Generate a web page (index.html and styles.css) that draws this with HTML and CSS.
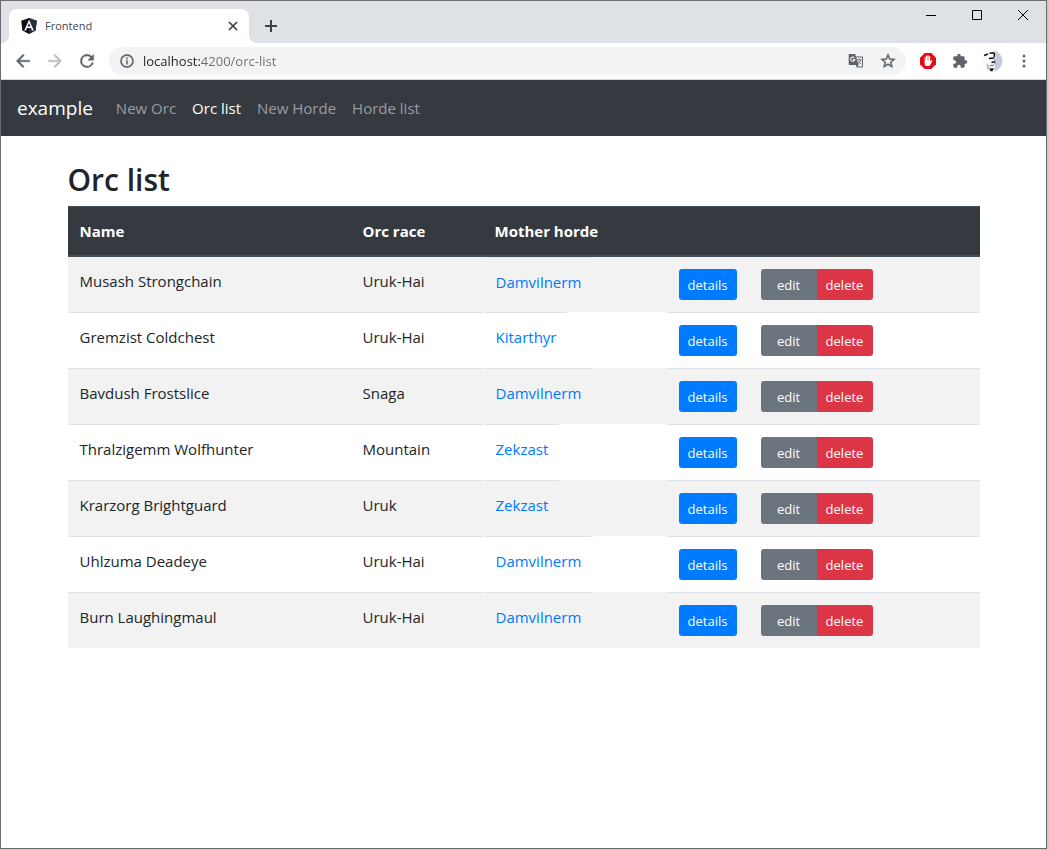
FILE: index.html
```html
<!DOCTYPE html>
<html lang="en">
<head>
<meta charset="utf-8">
<title>Frontend</title>
<link rel="stylesheet" href="styles.css">
</head>
<body>
<div class="window">
  <div class="tabstrip">
    <div class="tab">
      <svg class="favicon" viewBox="0 0 16 16" width="16" height="16"><path fill="#0b0f19" d="M8 0l7.800 2.700-1.200 9.800L8 16l-6.600-3.500L.2 2.700z"/><path fill="#263040" d="M8 0l7.800 2.700-1.200 9.800L8 16z"/><path fill="#fff" fill-rule="evenodd" d="M8 1.800L3.200 12.400H5l1-2.400h4l1 2.400h1.800zM6.600 8.500L8 5.100l1.400 3.400z"/></svg>
      <span class="tab-title">Frontend</span>
      <button class="tab-close" aria-label="Close tab"><svg viewBox="0 0 10 10" width="10" height="10"><path d="M1 1l8 8M9 1L1 9" stroke="#3c4043" stroke-width="1.700"/></svg></button>
    </div>
    <button class="new-tab" aria-label="New tab"><svg viewBox="0 0 12 12" width="12" height="12"><path d="M6 0v12M0 6h12" stroke="#3c4043" stroke-width="2"/></svg></button>
    <div class="window-controls">
      <button aria-label="Minimize"><svg viewBox="0 0 12 12" width="12" height="12"><path d="M1 6.500h10" stroke="#000"/></svg></button>
      <button aria-label="Maximize"><svg viewBox="0 0 12 12" width="12" height="12"><path d="M1.500 1.500h9v9h-9z" fill="none" stroke="#000"/></svg></button>
      <button aria-label="Close"><svg viewBox="0 0 12 12" width="12" height="12"><path d="M1 1l10 10M11 1L1 11" stroke="#000" stroke-width="1"/></svg></button>
    </div>
  </div>
  <div class="toolbar">
    <button class="tool" aria-label="Back"><svg viewBox="0 0 24 24" width="20" height="20"><path fill="#5f6368" stroke="#5f6368" stroke-width=".5" d="M20 11H7.830l5.590-5.590L12 4l-8 8 8 8 1.410-1.410L7.830 13H20z"/></svg></button>
    <button class="tool" aria-label="Forward"><svg viewBox="0 0 24 24" width="20" height="20"><path fill="#babcbe" stroke="#babcbe" stroke-width=".5" d="M4 11h12.170l-5.590-5.590L12 4l8 8-8 8-1.410-1.410L16.170 13H4z"/></svg></button>
    <button class="tool" aria-label="Reload"><svg viewBox="0 0 24 24" width="20" height="20"><path fill="#5f6368" stroke="#5f6368" stroke-width=".5" d="M17.650 6.350A7.960 7.960 0 0 0 12 4a8 8 0 1 0 7.730 10h-2.080A6 6 0 1 1 12 6c1.660 0 3.140.690 4.220 1.780L13 11h7V4z"/></svg></button>
    <div class="omnibox">
      <button class="tool" aria-label="Site information"><svg viewBox="0 0 24 24" width="16" height="16"><path fill="#5f6368" stroke="#5f6368" stroke-width=".5" d="M11 17h2v-6h-2zm1-15a10 10 0 1 0 0 20 10 10 0 0 0 0-20zm0 18a8 8 0 1 1 0-16 8 8 0 0 1 0 16zM11 9h2V7h-2z"/></svg></button>
      <input class="address" type="text" value="localhost:4200/orc-list" aria-label="Address">
      <button class="tool" aria-label="Translate"><svg viewBox="0 0 16 16" width="16" height="16"><path fill="#5f6368" d="M1.500 1h5.700l.800 2.500h6.200c.500 0 .800.300.800.800v9.400c0 .500-.300.800-.800.800H8.700l-.8-2.500H1.500c-.500 0-.800-.300-.8-.8V1.800c0-.500.300-.8.8-.8z"/><path fill="#f1f3f4" d="M8.300 4.500H14v9H9.500l1.200-1.600z"/><path fill="none" stroke="#5f6368" stroke-width=".9" d="M9.200 6.700h4.300M11.300 5.700v1M12.700 6.700c-.4 1.800-1.300 3-2.600 4M10.300 8.200l2.800 3"/><path fill="none" stroke="#f1f3f4" stroke-width="1.100" d="M6.400 4.900a2.100 2.100 0 1 0 .4 1.700H4.900"/></svg></button>
      <button class="tool" aria-label="Bookmark"><svg viewBox="0 0 24 24" width="18" height="18"><path fill="#5f6368" stroke="#5f6368" stroke-width=".5" d="M22 9.240l-7.190-.620L12 2 9.190 8.630 2 9.240l5.460 4.730L5.820 21 12 17.270 18.180 21l-1.630-7.030zM12 15.400l-3.760 2.270 1-4.280-3.320-2.880 4.380-.380L12 6.100l1.710 4.040 4.380.380-3.320 2.880 1 4.280z"/></svg></button>
    </div>
    <button class="tool" aria-label="Ad blocker"><svg viewBox="0 0 16 16" width="16" height="16"><path fill="#e40d13" d="M4.700 0h6.600L16 4.700v6.600L11.300 16H4.700L0 11.300V4.700z"/><path fill="#fff" d="M4.600 7.700V4.400c0-.8 1.100-.8 1.100 0v2.800h.3V3.200c0-.9 1.200-.9 1.200 0V7h.3V2.900c0-.9 1.200-.9 1.200 0V7H9V3.600c0-.9 1.200-.9 1.200 0v5l.9-1.100c.5-.6 1.400-.2 1.100.5l-1.800 3.800c-.4.900-1 1.300-2 1.300H7.200c-1.600 0-2.600-1-2.600-2.600z"/></svg></button>
    <button class="tool" aria-label="Extensions"><svg viewBox="0 0 24 24" width="16" height="16"><path fill="#5f6368" d="M20.500 11H19V7a2 2 0 0 0-2-2h-4V3.500a2.500 2.500 0 0 0-5 0V5H4a2 2 0 0 0-2 2v3.800h1.500a2.700 2.700 0 0 1 0 5.400H2V20a2 2 0 0 0 2 2h3.800v-1.500a2.700 2.700 0 0 1 5.400 0V22H17a2 2 0 0 0 2-2v-4h1.500a2.500 2.500 0 0 0 0-5z"/></svg></button>
    <button class="tool" aria-label="Profile"><svg viewBox="0 0 22 22" width="22" height="22"><circle cx="11" cy="11" r="10.500" fill="#f8f9f9"/><path fill="#c5cae0" d="M12.500.6A10.500 10.500 0 0 1 13 21.300l1.300-6L14.800 7z"/><path fill="none" stroke="#111" stroke-width="1.500" d="M3 5.500l4-1.500M8.500 3.300l4.500-.5M13.300 3v4M8 8.500l5.500-.5M10.500 12.500l3.500-.8"/><path fill="none" stroke="#555" stroke-width=".9" d="M6 14.500l2 3M14 9.500v5M9 15.500l4-.3M6 17.500l2 2"/><path fill="#111" d="M8.500 18.500l4.500-.3-1.500 3H9.500z"/></svg></button>
    <button class="tool" aria-label="Menu"><svg viewBox="0 0 4 14" width="4" height="14"><g fill="#5f6368"><circle cx="2" cy="2" r="1.500"/><circle cx="2" cy="7" r="1.500"/><circle cx="2" cy="12" r="1.500"/></g></svg></button>
  </div>

  <nav class="navbar">
    <a class="brand" href="#">example</a>
    <a class="nav-link" href="#">New Orc</a>
    <a class="nav-link active" href="#">Orc list</a>
    <a class="nav-link" href="#">New Horde</a>
    <a class="nav-link" href="#">Horde list</a>
  </nav>

  <main class="container">
    <h1>Orc list</h1>
    <table class="orcs">
      <colgroup><col class="col-name"><col class="col-race"><col class="col-horde"><col class="col-details"><col></colgroup>
      <thead>
        <tr><th scope="col">Name</th><th scope="col">Orc race</th><th scope="col">Mother horde</th><th></th><th></th></tr>
      </thead>
      <tbody>
        <tr><td>Musash Strongchain</td><td>Uruk-Hai</td><td class="horde"><a href="#">Damvilnerm</a></td><td><button class="btn primary">details</button></td><td><div class="btn-group"><button class="btn secondary">edit</button><button class="btn danger">delete</button></div></td></tr>
        <tr><td>Gremzist Coldchest</td><td>Uruk-Hai</td><td class="horde"><a href="#">Kitarthyr</a></td><td><button class="btn primary">details</button></td><td><div class="btn-group"><button class="btn secondary">edit</button><button class="btn danger">delete</button></div></td></tr>
        <tr><td>Bavdush Frostslice</td><td>Snaga</td><td class="horde"><a href="#">Damvilnerm</a></td><td><button class="btn primary">details</button></td><td><div class="btn-group"><button class="btn secondary">edit</button><button class="btn danger">delete</button></div></td></tr>
        <tr><td>Thralzigemm Wolfhunter</td><td>Mountain</td><td class="horde"><a href="#">Zekzast</a></td><td><button class="btn primary">details</button></td><td><div class="btn-group"><button class="btn secondary">edit</button><button class="btn danger">delete</button></div></td></tr>
        <tr><td>Krarzorg Brightguard</td><td>Uruk</td><td class="horde"><a href="#">Zekzast</a></td><td><button class="btn primary">details</button></td><td><div class="btn-group"><button class="btn secondary">edit</button><button class="btn danger">delete</button></div></td></tr>
        <tr><td>Uhlzuma Deadeye</td><td>Uruk-Hai</td><td class="horde"><a href="#">Damvilnerm</a></td><td><button class="btn primary">details</button></td><td><div class="btn-group"><button class="btn secondary">edit</button><button class="btn danger">delete</button></div></td></tr>
        <tr><td>Burn Laughingmaul</td><td>Uruk-Hai</td><td class="horde"><a href="#">Damvilnerm</a></td><td><button class="btn primary">details</button></td><td><div class="btn-group"><button class="btn secondary">edit</button><button class="btn danger">delete</button></div></td></tr>
      </tbody>
    </table>
  </main>
</div>
</body>
</html>
```
FILE: styles.css
```css
* { box-sizing: border-box; }

body {
  margin: 0;
  padding: 0 2px 1px 0;
  background: #c8c8c8;
  font-family: "Open Sans", "Noto Sans", sans-serif;
  font-size: 15px;
  line-height: 24px;
  color: #212529;
}

button {
  margin: 0;
  padding: 0;
  border: 0;
  background: none;
  font: inherit;
  color: inherit;
}

a { text-decoration: none; }

.window {
  min-height: calc(100vh - 1px);
  border: 1px solid #6b6b6d;
  background: #fff;
}

/* Browser frame */
.tabstrip {
  display: flex;
  align-items: flex-start;
  height: 42px;
  padding-left: 8px;
  background: #dee1e6;
}

.tab {
  position: relative;
  display: flex;
  align-items: center;
  gap: 8px;
  width: 240px;
  height: 34px;
  margin-top: 8px;
  padding: 0 8px 0 12px;
  border-radius: 8px 8px 0 0;
  background: #fff;
}

.tab::before,
.tab::after {
  content: "";
  position: absolute;
  bottom: 0;
  width: 8px;
  height: 8px;
}

.tab::before {
  right: 100%;
  background: radial-gradient(circle at 0 0, #dee1e6 8px, #fff 8px);
}

.tab::after {
  left: 100%;
  background: radial-gradient(circle at 100% 0, #dee1e6 8px, #fff 8px);
}

.tab-title {
  flex: 1;
  font-size: 11px;
  color: #45494d;
}

.tab-close,
.new-tab,
.tool,
.window-controls button {
  display: flex;
  align-items: center;
  justify-content: center;
}

.tab-close { width: 16px; height: 16px; }

.new-tab {
  width: 28px;
  height: 28px;
  margin: 11px 0 0 8px;
}

.window-controls {
  display: flex;
  margin-left: auto;
}

.window-controls button { width: 46px; height: 28px; }

.toolbar {
  display: flex;
  align-items: center;
  height: 37px;
  padding: 0 6px;
  border-bottom: 1px solid #d5d7da;
  background: #fff;
}

.tool {
  flex: none;
  width: 32px;
  height: 28px;
}

.omnibox {
  display: flex;
  flex: 1;
  height: 28px;
  margin: 0 6px;
  padding: 0 2px;
  border-radius: 14px;
  background: #f1f3f4;
}

/* The host part of the address is darker than the port and path */
.address {
  flex: 1;
  min-width: 0;
  padding: 0;
  border: 0;
  outline: 0;
  font: inherit;
  font-size: 13px;
  color: transparent;
  background: linear-gradient(90deg, #202124 57px, #6a6e73 57px);
  background-clip: text;
  -webkit-background-clip: text;
}

/* Application */
.navbar {
  display: flex;
  align-items: center;
  min-height: 56px;
  padding: 8px 16px;
  background: #343a40;
}

.brand {
  margin-right: 15px;
  font-size: 19px;
  line-height: 30px;
  color: #fff;
}

.nav-link {
  padding: 8px;
  color: #9a9da0;
}

.nav-link.active { color: #fff; }

.container {
  max-width: 944px;
  margin: 0 auto;
  padding: 25px 16px;
}

h1 {
  margin: 0 0 7px;
  font-size: 30px;
  line-height: 38px;
  font-weight: 600;
}

.orcs {
  width: 100%;
  table-layout: fixed;
  border-spacing: 0;
}

.col-name { width: 283px; }
.col-race { width: 132px; }
.col-horde { width: 184px; }
.col-details { width: 82px; }

.orcs th {
  padding: 12px;
  border-top: 1px solid #454d55;
  border-bottom: 2px solid #454d55;
  background: #343a40;
  color: #fff;
  text-align: left;
  font-weight: 700;
}

.orcs td {
  padding: 12px;
  border-top: 1px solid #dee2e6;
  vertical-align: top;
}

.orcs tbody tr:nth-child(odd) { background: #f2f2f2; }
.orcs tbody tr:first-child td { border-top: 0; }

.orcs td.horde {
  padding: 0 0 0 1px;
  border-top: 0;
}

.horde a {
  display: inline-block;
  padding: 12px;
  border-top: 1px solid #dee2e6;
  border-radius: 2px;
  color: #007bff;
}

.orcs tbody tr:first-child a { border-top-color: #e8eaed; }

.btn {
  display: block;
  min-width: 56px;
  height: 31px;
  padding: 0 8px;
  border-radius: 3px;
  font-size: 13px;
  color: #fff;
}

.btn-group { display: flex; }

.primary { min-width: 58px; background: #007bff; }
.secondary { border-radius: 3px 0 0 3px; background: #6c757d; }
.danger { border-radius: 0 3px 3px 0; background: #dc3545; }
```
